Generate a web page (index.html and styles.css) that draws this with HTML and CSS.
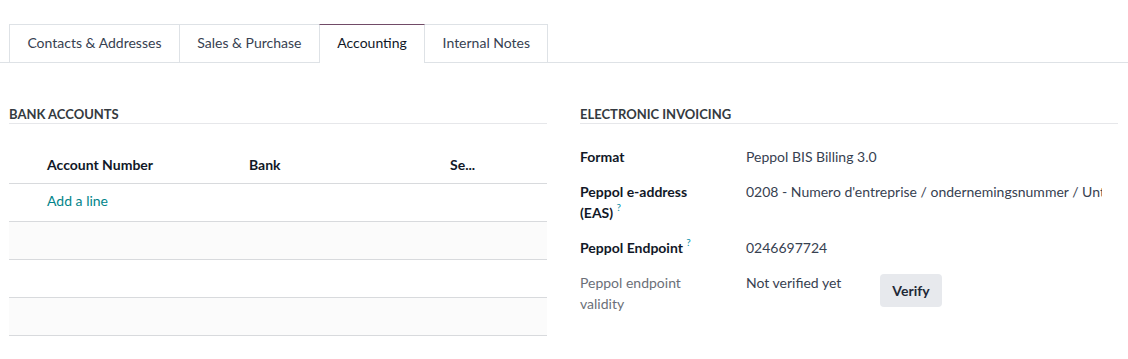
FILE: index.html
```html
<!DOCTYPE html>
<html>
<head>
<meta charset="utf-8">
<link rel="stylesheet" href="styles.css">
</head>
<body>
<div class="nav">
  <div class="tab">Contacts &amp; Addresses</div>
  <div class="tab">Sales &amp; Purchase</div>
  <div class="tab active">Accounting</div>
  <div class="tab">Internal Notes</div>
</div>
<div class="content">
  <section class="col">
    <h3 class="sep">BANK ACCOUNTS</h3>
    <table class="list">
      <thead>
        <tr>
          <th class="handle"></th>
          <th class="c1">Account Number</th>
          <th class="c2">Bank</th>
          <th class="c3">Se...</th>
          <th class="trash"></th>
        </tr>
      </thead>
      <tbody>
        <tr><td></td><td colspan="4"><a class="add">Add a line</a></td></tr>
        <tr class="odd"><td colspan="5"></td></tr>
        <tr><td colspan="5"></td></tr>
        <tr class="odd"><td colspan="5"></td></tr>
      </tbody>
    </table>
  </section>
  <section class="col">
    <h3 class="sep">ELECTRONIC INVOICING</h3>
    <div class="group">
      <div class="lbl">Format</div>
      <div class="val">Peppol BIS Billing 3.0</div>
      <div class="lbl">Peppol e-address<br>(EAS) <sup class="help">?</sup></div>
      <div class="val"><span class="clip">0208 - Numero d'entreprise / ondernemingsnummer / Unternehmensnummer</span></div>
      <div class="lbl">Peppol Endpoint <sup class="help">?</sup></div>
      <div class="val">0246697724</div>
      <div class="lbl muted">Peppol endpoint<br>validity</div>
      <div class="val validity"><span class="status">Not verified yet</span><button class="btn">Verify</button></div>
    </div>
  </section>
</div>
</body>
</html>
```
FILE: styles.css
```css
html, body {
  margin: 0;
  padding: 0;
  background: #ffffff;
}
body {
  font-family: Lato, "Open Sans", sans-serif;
  font-size: 14px;
  color: #374151;
}
.nav {
  display: flex;
  margin-top: 24px;
  padding-left: 9px;
  border-bottom: 1px solid #dee2e6;
}
.tab {
  box-sizing: border-box;
  height: 38px;
  line-height: 36px;
  padding: 0 17.4px;
  border: 1px solid #dee2e6;
  border-bottom: none;
  margin-right: -1px;
  margin-bottom: -1px;
  color: #374151;
  background: #fff;
}
.tab.active {
  height: 39px;
  border-top-color: #714b67;
  color: #111827;
  position: relative;
  z-index: 1;
}
.content {
  display: grid;
  grid-template-columns: 538px 538px;
  column-gap: 33px;
  padding-left: 9px;
}
.sep {
  margin: 42px 0 0 0;
  font-size: 13px;
  font-weight: 700;
  line-height: 18px;
  color: #343a40;
  border-bottom: 1px solid #e6e7ea;
}
.list {
  margin-top: 22px;
  width: 538px;
  border-collapse: collapse;
  table-layout: fixed;
}
.list th {
  text-align: left;
  font-weight: 700;
  color: #111827;
  height: 37px;
  padding: 0 8px;
  border-bottom: 1px solid #d8dadd;
  white-space: nowrap;
  overflow: hidden;
}
.list .handle { width: 14px; padding: 0 8px; }
.list .c1 { width: 186px; }
.list .c2 { width: 185px; }
.list .c3 { width: 49px; }
.list .trash { width: 24px; }
.list td {
  height: 37px;
  padding: 0 8px;
  border-bottom: 1px solid #d8dadd;
}
.list tr.odd td {
  background: #fbfbfb;
}
.add {
  display: inline-block;
  transform: translateY(-2px);
  color: #01848a;
  cursor: pointer;
}
.group {
  display: grid;
  grid-template-columns: 166px 372px;
  row-gap: 14px;
  margin-top: 22px;
  line-height: 21px;
}
.lbl {
  font-weight: 700;
  color: #111827;
}
.lbl.muted {
  font-weight: 400;
  color: #6b6f78;
}
.help {
  color: #0b8fa6;
  font-size: 10px;
  font-weight: 400;
  vertical-align: top;
  position: relative;
  top: -5px;
}
.val {
  color: #374151;
  min-width: 0;
}
.clip {
  display: block;
  width: 356px;
  overflow: hidden;
  white-space: nowrap;
}
.validity {
  display: flex;
  align-items: flex-start;
}
.status {
  width: 134px;
}
.btn {
  margin-top: 2px;
  height: 33px;
  width: 62px;
  padding: 0;
  border: none;
  border-radius: 4px;
  background: #e7e9ed;
  color: #1f2937;
  font-family: inherit;
  font-size: 14px;
  font-weight: 700;
}
```
